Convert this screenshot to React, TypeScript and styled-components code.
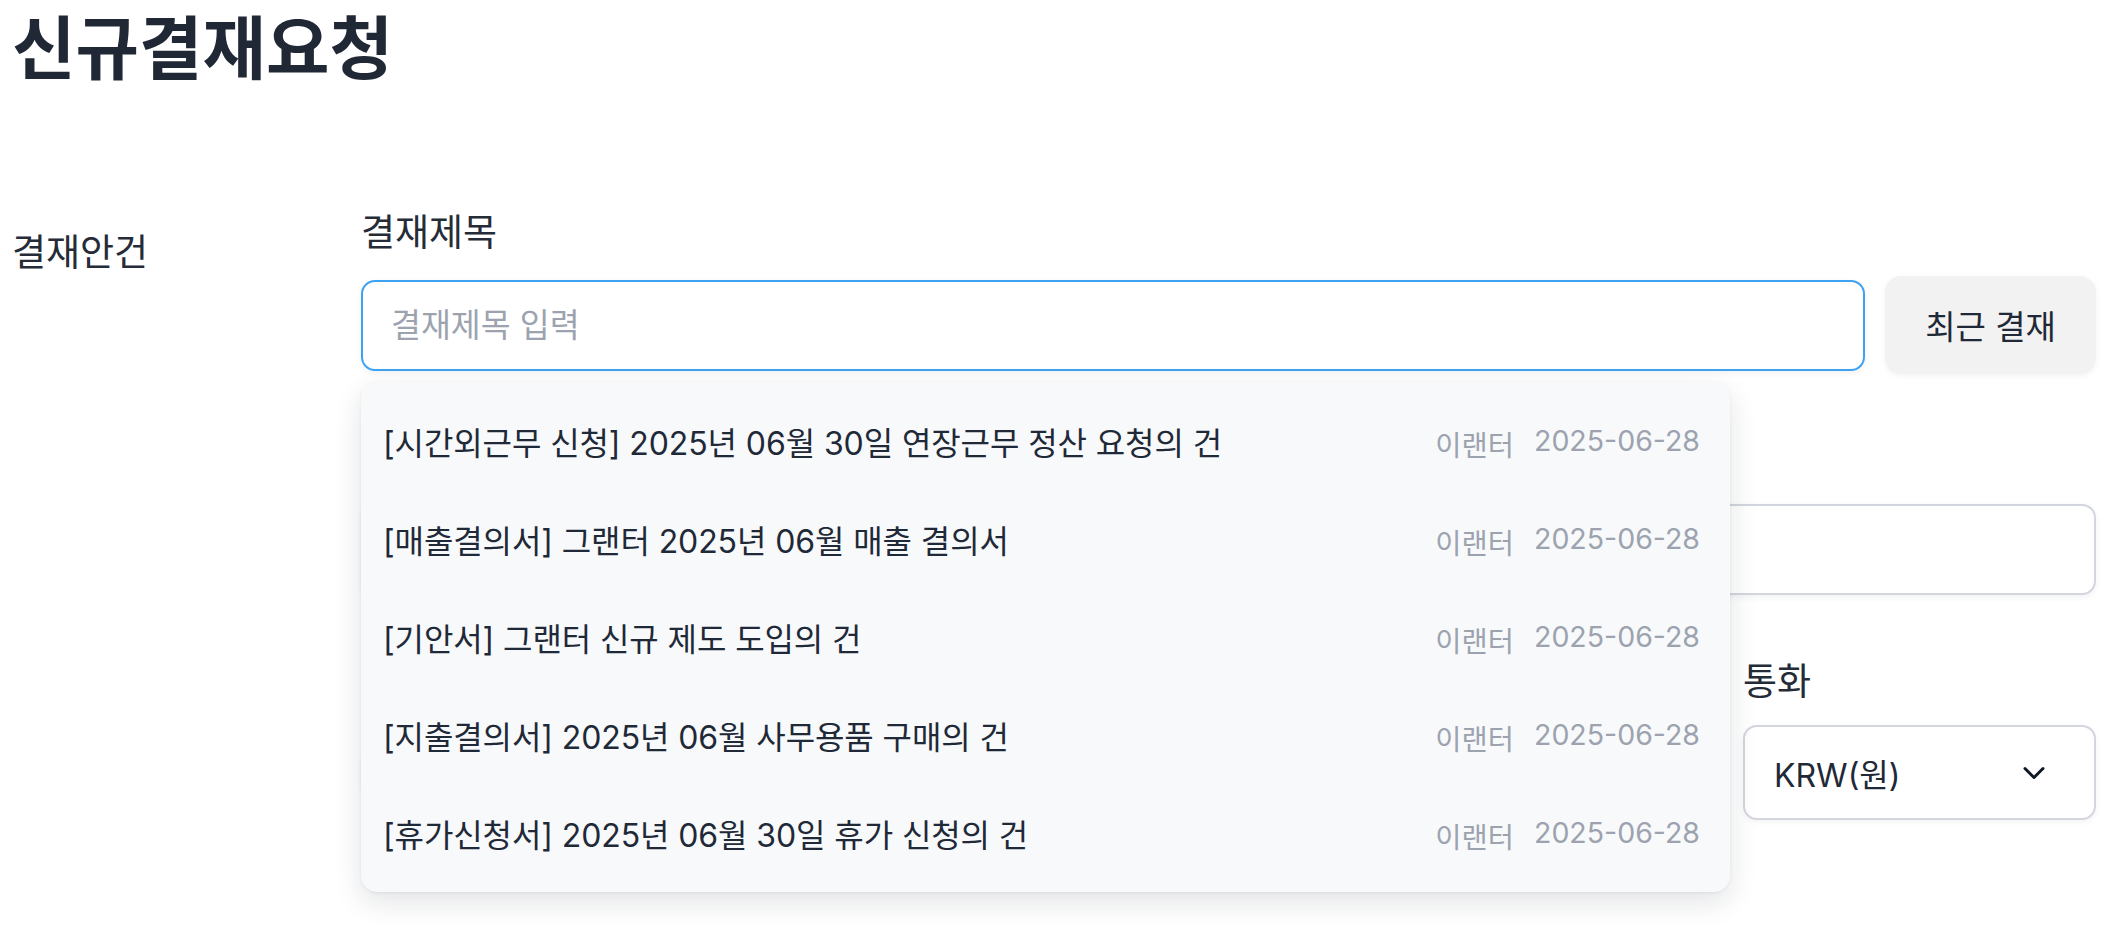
import React from "react";
import styled, { createGlobalStyle } from "styled-components";
import { ChevronDown } from "lucide-react";

const GlobalStyle = createGlobalStyle`
  html, body { margin: 0; padding: 0; background: #ffffff; }
  body {
    font-family: Inter, "Noto Sans CJK KR", sans-serif;
    color: #1f2937;
  }
  * { box-sizing: border-box; }
`;

const Page = styled.main`
  min-height: 930px;
  padding: 9px 26px 40px 12px;
`;

const Title = styled.h1`
  margin: 0;
  font-size: 69px;
  line-height: 80px;
  font-weight: 700;
  letter-spacing: 0;
  color: #202836;
`;

const Section = styled.section`
  margin-top: 117px;
  display: grid;
  grid-template-columns: 349px 1fr;
`;

const SectionLabel = styled.div`
  padding-top: 25px;
  font-size: 37px;
  line-height: 44px;
  color: #252c38;
`;

const Fields = styled.div`
  display: flex;
  flex-direction: column;
  gap: 60px;
`;

const Field = styled.div<{ $width?: number; $anchor?: boolean }>`
  position: ${(p) => (p.$anchor ? "relative" : "static")};
  display: flex;
  flex-direction: column;
  gap: 21px;
  ${(p) => (p.$width ? `width: ${p.$width}px; flex: none;` : "flex: 1; min-width: 0;")}
`;

const FieldLabel = styled.label`
  padding-top: 5px;
  font-size: 37px;
  line-height: 44px;
  color: #252c38;
`;

const Row = styled.div`
  display: flex;
  align-items: center;
  gap: 20px;
`;

const TextInput = styled.input<{ $focused?: boolean }>`
  flex: 1;
  min-width: 0;
  height: 91px;
  border: 2px solid ${(p) => (p.$focused ? "#3ea2f2" : "#d3d6de")};
  border-radius: 14px;
  padding: 0 28px;
  font: inherit;
  font-size: 32.5px;
  color: #1f2937;
  background: #ffffff;
  outline: none;
  box-shadow: 0 2px 6px rgba(17, 24, 39, 0.06);
  &::placeholder {
    color: #9ca3af;
  }
`;

const GhostButton = styled.button`
  width: 211px;
  height: 98px;
  flex: none;
  border: none;
  border-radius: 16px;
  background: #f2f2f2;
  font: inherit;
  font-size: 33px;
  color: #1f2937;
  box-shadow: 0 2px 6px rgba(0, 0, 0, 0.05);
`;

const SelectBox = styled.div`
  height: 95px;
  display: flex;
  align-items: center;
  justify-content: space-between;
  padding: 0 42px 0 29px;
  border: 2px solid #d3d6de;
  border-radius: 14px;
  background: #ffffff;
  font-size: 32px;
  color: #1f2937;
  box-shadow: 0 2px 6px rgba(17, 24, 39, 0.05);
`;

const Suggest = styled.ul`
  position: absolute;
  z-index: 10;
  top: calc(100% + 8px);
  left: 0;
  width: 1369px;
  margin: 0;
  padding: 10px 0;
  list-style: none;
  background: #f8f9fb;
  border-radius: 16px;
  box-shadow: 0 10px 28px rgba(17, 24, 39, 0.12), 0 1px 3px rgba(17, 24, 39, 0.06);
`;

const SuggestItem = styled.li`
  height: 98px;
  display: flex;
  align-items: center;
  justify-content: space-between;
  padding: 0 30px 0 22px;
`;

const ItemTitle = styled.span`
  font-size: 32px;
  letter-spacing: -0.1px;
  color: #1f2937;
  white-space: nowrap;
`;

const ItemMeta = styled.span`
  display: flex;
  gap: 20px;
  padding-top: 4px;
  font-size: 28.5px;
  color: #9ca3af;
  white-space: nowrap;
`;

const recent = [
  "[시간외근무 신청] 2025년 06월 30일 연장근무 정산 요청의 건",
  "[매출결의서] 그랜터 2025년 06월 매출 결의서",
  "[기안서] 그랜터 신규 제도 도입의 건",
  "[지출결의서] 2025년 06월 사무용품 구매의 건",
  "[휴가신청서] 2025년 06월 30일 휴가 신청의 건",
];

export default function App() {
  return (
    <>
      <GlobalStyle />
      <Page>
        <Title>신규결재요청</Title>
        <Section>
          <SectionLabel>결재안건</SectionLabel>
          <Fields>
            <Field $anchor>
              <FieldLabel>결재제목</FieldLabel>
              <Row>
                <TextInput $focused placeholder="결재제목 입력" />
                <GhostButton>최근 결재</GhostButton>
              </Row>
              <Suggest>
                {recent.map((t) => (
                  <SuggestItem key={t}>
                    <ItemTitle>{t}</ItemTitle>
                    <ItemMeta>
                      <span>이랜터</span>
                      <span>2025-06-28</span>
                    </ItemMeta>
                  </SuggestItem>
                ))}
              </Suggest>
            </Field>
            <Field>
              <FieldLabel>결재내용</FieldLabel>
              <Row>
                <TextInput placeholder="" />
              </Row>
            </Field>
            <Row>
              <Field>
                <FieldLabel>금액</FieldLabel>
                <TextInput placeholder="" />
              </Field>
              <Field $width={353}>
                <FieldLabel>통화</FieldLabel>
                <SelectBox>
                  <span>KRW(원)</span>
                  <ChevronDown size={36} strokeWidth={2} color="#111827" />
                </SelectBox>
              </Field>
            </Row>
          </Fields>
        </Section>
      </Page>
    </>
  );
}
